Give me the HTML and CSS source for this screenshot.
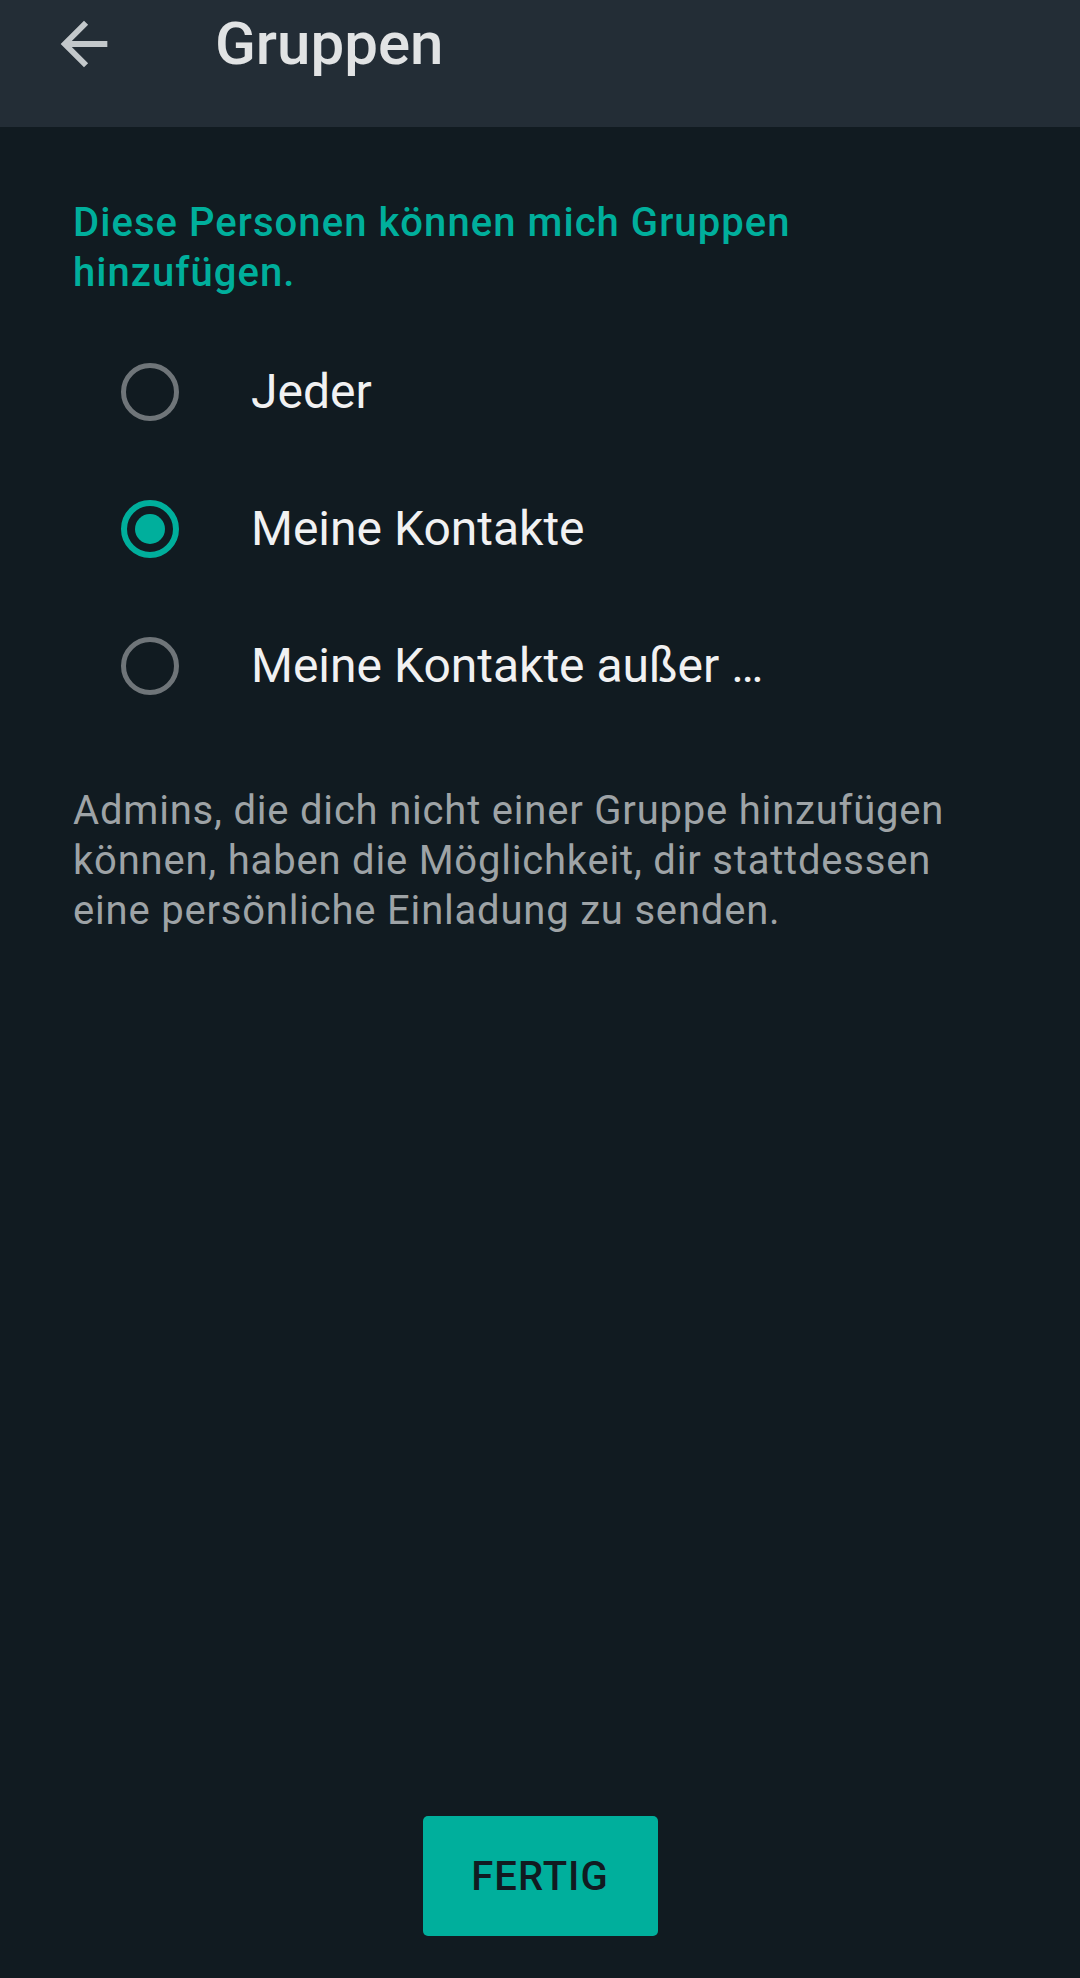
FILE: index.html
```html
<!DOCTYPE html>
<html lang="de">
<head>
    <meta charset="UTF-8">
    <meta name="viewport" content="width=device-width, initial-scale=1.0">
    <title>Gruppen</title>
    <link rel="stylesheet" href="styles.css">
</head>
<body>

    <div class="screen">
        <div class="toolbar">
            <svg class="back" viewBox="0 0 24 24" width="70" height="70">
                <path d="M20 11H7.83l5.59-5.59L12 4l-8 8 8 8 1.41-1.41L7.83 13H20v-2z"/>
            </svg>
            <h1>Gruppen</h1>
        </div>

        <div class="content">
            <h2>Diese Personen können mich Gruppen hinzufügen.</h2>

            <div class="options">
                <div class="option">
                    <span class="radio"></span>
                    <span class="label">Jeder</span>
                </div>
                <div class="option">
                    <span class="radio checked"></span>
                    <span class="label">Meine Kontakte</span>
                </div>
                <div class="option">
                    <span class="radio"></span>
                    <span class="label">Meine Kontakte außer …</span>
                </div>
            </div>

            <p class="note">Admins, die dich nicht einer Gruppe hinzufügen können, haben die Möglichkeit, dir stattdessen eine persönliche Einladung zu senden.</p>
        </div>

        <div class="footer">
            <button class="done">FERTIG</button>
        </div>
    </div>

</body>
</html>
```

FILE: styles.css
```css
body {
    margin: 0;
    background-color: #111b21;
    font-family: Roboto, "Liberation Sans", sans-serif;
}

.screen {
    display: flex;
    flex-direction: column;
    min-height: 100vh;
}

.toolbar {
    display: flex;
    align-items: center;
    height: 88px;
    padding-bottom: 39px;
    background-color: #232d36;
}

.back {
    fill: #c3c8cb;
    margin-left: 49px;
}

h1 {
    margin: 0 0 0 96px;
    font-size: 60px;
    font-weight: 500;
    line-height: 70px;
    color: #e1e3e4;
}

.content {
    flex: 1;
    padding: 0 73px;
}

h2 {
    margin: 71px 0 0;
    max-width: 760px;
    font-size: 40px;
    font-weight: 500;
    line-height: 50px;
    letter-spacing: 1.05px;
    color: #00af9c;
}

.options {
    margin-top: 25px;
}

.option {
    display: flex;
    align-items: center;
    height: 137px;
}

.radio {
    box-sizing: border-box;
    width: 58px;
    height: 58px;
    margin-left: 48px;
    border: 5px solid #6f7579;
    border-radius: 50%;
    display: flex;
    align-items: center;
    justify-content: center;
}

.radio.checked {
    border: 6px solid #00af9c;
}

.radio.checked::after {
    content: "";
    width: 30px;
    height: 30px;
    border-radius: 50%;
    background-color: #00af9c;
}

.label {
    margin-left: 72px;
    font-size: 48px;
    color: #f1f1f2;
}

.note {
    margin: 52px 0 0;
    font-size: 40px;
    line-height: 50px;
    letter-spacing: 0.8px;
    color: #9ea3a6;
}

.footer {
    display: flex;
    justify-content: center;
    padding-bottom: 42px;
}

.done {
    width: 235px;
    height: 120px;
    border: none;
    border-radius: 5px;
    background-color: #00af9c;
    font-family: Roboto, "Liberation Sans", sans-serif;
    font-size: 40px;
    font-weight: 500;
    letter-spacing: 1px;
    color: #111b21;
}
```
